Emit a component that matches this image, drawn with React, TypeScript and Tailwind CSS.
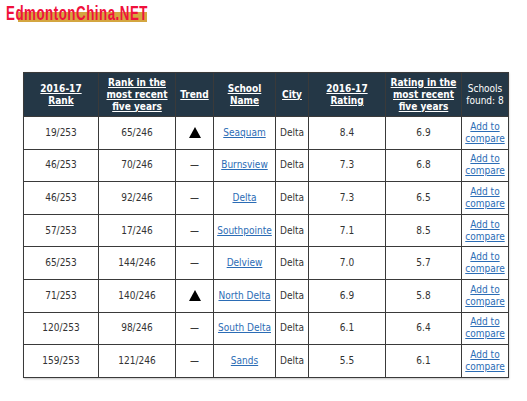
const rows = [
  { rank: '19/253', recent: '65/246', up: true, name: 'Seaquam', rating: '8.4', avg: '6.9' },
  { rank: '46/253', recent: '70/246', up: false, name: 'Burnsview', rating: '7.3', avg: '6.8' },
  { rank: '46/253', recent: '92/246', up: false, name: 'Delta', rating: '7.3', avg: '6.5' },
  { rank: '57/253', recent: '17/246', up: false, name: 'Southpointe', rating: '7.1', avg: '8.5' },
  { rank: '65/253', recent: '144/246', up: false, name: 'Delview', rating: '7.0', avg: '5.7' },
  { rank: '71/253', recent: '140/246', up: true, name: 'North Delta', rating: '6.9', avg: '5.8' },
  { rank: '120/253', recent: '98/246', up: false, name: 'South Delta', rating: '6.1', avg: '6.4' },
  { rank: '159/253', recent: '121/246', up: false, name: 'Sands', rating: '5.5', avg: '6.1' },
];

const th = 'border border-[#3a3a3a] px-0 align-middle font-bold';
const td = 'border border-[#3a3a3a] px-0 text-center align-middle';

export default function App() {
  return (
    <div
      className="w-[527px] h-[401px] bg-white overflow-hidden"
      style={{ fontFamily: '"DejaVu Sans Condensed", "DejaVu Sans", sans-serif' }}
    >
      {/* logo */}
      <div className="relative ml-[6px] mt-[3px] h-[21px] w-[145px]">
        <div className="absolute left-[12px] top-[9px] w-[129px] h-[10px] bg-[#d4a640]" />
        <span
          className="absolute left-0 top-0 inline-block origin-left scale-x-[0.665] text-[20px] leading-[21px] font-bold text-[#f0103c] tracking-[0.8px]"
          style={{ fontFamily: '"Liberation Sans Narrow", "Liberation Sans", sans-serif' }}
        >
          EdmontonChina.NET
        </span>
      </div>

      <div className="ml-[23px] mt-[48px] w-[485px] shadow-[1px_1px_2px_rgba(0,0,0,0.25)]">
        <table className="w-[485px] border-collapse table-fixed text-[10px] text-[#333]">
          <colgroup>
            <col className="w-[75px]" />
            <col className="w-[77px]" />
            <col className="w-[38px]" />
            <col className="w-[62px]" />
            <col className="w-[33px]" />
            <col className="w-[77px]" />
            <col className="w-[76px]" />
            <col className="w-[47px]" />
          </colgroup>
          <thead>
            <tr className="h-[44px] bg-[#243746] text-white leading-[12px]">
              <th className={th}><span className="underline">2016-17<br />Rank</span></th>
              <th className={th}><span className="underline">Rank in the<br />most recent<br />five years</span></th>
              <th className={th}><span className="underline">Trend</span></th>
              <th className={th}><span className="underline">School<br />Name</span></th>
              <th className={th}><span className="underline">City</span></th>
              <th className={th}><span className="underline">2016-17<br />Rating</span></th>
              <th className={th}><span className="underline">Rating in the<br />most recent<br />five years</span></th>
              <th className="border border-[#3a3a3a] px-0 align-middle font-normal whitespace-nowrap">Schools<br />found: 8</th>
            </tr>
          </thead>
          <tbody>
            {rows.map((r) => (
              <tr key={r.name} className="h-[32.6px] leading-[12px]">
                <td className={td}>{r.rank}</td>
                <td className={td}>{r.recent}</td>
                <td className={td}>
                  {r.up ? (
                    <svg width="12" height="11" viewBox="0 0 12 11" className="mx-auto">
                      <path d="M6 0 L12 11 L0 11 Z" fill="#000" />
                    </svg>
                  ) : (
                    <span className="text-black">—</span>
                  )}
                </td>
                <td className={td}>
                  <span className="text-[#2b6cb5] underline whitespace-nowrap">{r.name}</span>
                </td>
                <td className={td}>Delta</td>
                <td className={td}>{r.rating}</td>
                <td className={td}>{r.avg}</td>
                <td className={td}>
                  <span className="text-[#2b6cb5] underline whitespace-nowrap">Add to<br />compare</span>
                </td>
              </tr>
            ))}
          </tbody>
        </table>
      </div>
    </div>
  );
}
